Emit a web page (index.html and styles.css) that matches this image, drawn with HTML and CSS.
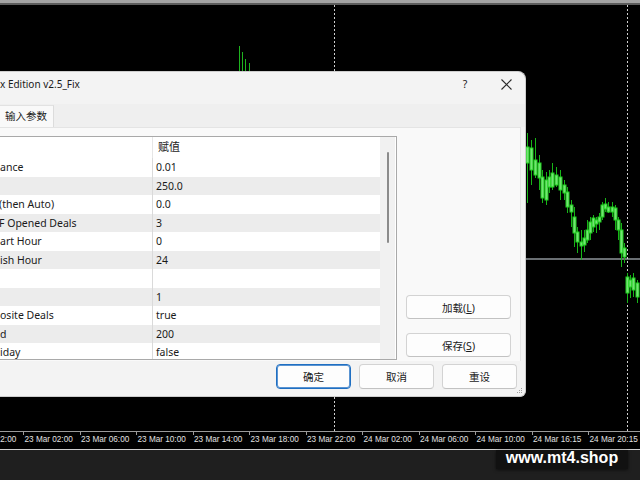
FILE: index.html
```html
<!DOCTYPE html>
<html>
<head>
<meta charset="utf-8">
<link rel="stylesheet" href="styles.css">
</head>
<body>
<div class="screen">
  <div class="topbar"></div>
  <div class="chart">
    <svg class="plot" width="640" height="426" viewBox="0 5 640 426">
      <line x1="0" y1="259" x2="640" y2="259" stroke="#8e949a" stroke-width="1.5"/>
      <line x1="334.5" y1="5" x2="334.5" y2="431" stroke="#d0d0d0" stroke-width="1" stroke-dasharray="2 2"/>
      <line x1="627.5" y1="5" x2="627.5" y2="431" stroke="#d0d0d0" stroke-width="1" stroke-dasharray="2 2"/>
      <g stroke="#1fb31f" stroke-width="1">
        <line x1="239.5" y1="46" x2="239.5" y2="72"/>
        <line x1="242.5" y1="52" x2="242.5" y2="72"/>
        <line x1="245.5" y1="59" x2="245.5" y2="72"/>
        <line x1="249.5" y1="63" x2="249.5" y2="72"/>
      </g>
      <g class="wicks" stroke="#17b517" stroke-width="1">
        <line x1="527.5" y1="133" x2="527.5" y2="203"/>
        <line x1="531.5" y1="140" x2="531.5" y2="185"/>
        <line x1="535.5" y1="138" x2="535.5" y2="178"/>
        <line x1="539.5" y1="155" x2="539.5" y2="190"/>
        <line x1="542.5" y1="170" x2="542.5" y2="203"/>
        <line x1="546.5" y1="172" x2="546.5" y2="205"/>
        <line x1="549.5" y1="170" x2="549.5" y2="193"/>
        <line x1="552.5" y1="163" x2="552.5" y2="190"/>
        <line x1="556.5" y1="167" x2="556.5" y2="187"/>
        <line x1="560.5" y1="170" x2="560.5" y2="200"/>
        <line x1="564.5" y1="180" x2="564.5" y2="200"/>
        <line x1="567.5" y1="187" x2="567.5" y2="213"/>
        <line x1="571.5" y1="200" x2="571.5" y2="227"/>
        <line x1="574.5" y1="207" x2="574.5" y2="247"/>
        <line x1="577.5" y1="227" x2="577.5" y2="253"/>
        <line x1="581.5" y1="230" x2="581.5" y2="260"/>
        <line x1="584.5" y1="230" x2="584.5" y2="252"/>
        <line x1="587.5" y1="220" x2="587.5" y2="243"/>
        <line x1="590.5" y1="217" x2="590.5" y2="240"/>
        <line x1="593.5" y1="215" x2="593.5" y2="232"/>
        <line x1="596.5" y1="217" x2="596.5" y2="233"/>
        <line x1="599.5" y1="213" x2="599.5" y2="230"/>
        <line x1="602.5" y1="202" x2="602.5" y2="220"/>
        <line x1="605.5" y1="198" x2="605.5" y2="212"/>
        <line x1="608.5" y1="202" x2="608.5" y2="213"/>
        <line x1="612.5" y1="202" x2="612.5" y2="217"/>
        <line x1="615.5" y1="205" x2="615.5" y2="230"/>
        <line x1="618.5" y1="217" x2="618.5" y2="240"/>
        <line x1="621.5" y1="223" x2="621.5" y2="267"/>
        <line x1="624.5" y1="243" x2="624.5" y2="263"/>
        <line x1="627.5" y1="273" x2="627.5" y2="303"/>
        <line x1="630.5" y1="275" x2="630.5" y2="298"/>
        <line x1="633.5" y1="273" x2="633.5" y2="297"/>
        <line x1="637.5" y1="280" x2="637.5" y2="303"/>
      </g>
      <g class="bodies" fill="#74e274" stroke="#1fd21f" stroke-width="1">
        <rect x="526" y="147" width="3" height="16"/>
        <rect x="530" y="148" width="3" height="22"/>
        <rect x="534" y="160" width="3" height="15"/>
        <rect x="538" y="163" width="3" height="15"/>
        <rect x="541" y="177" width="3" height="21"/>
        <rect x="545" y="180" width="3" height="20"/>
        <rect x="548" y="177" width="3" height="10"/>
        <rect x="551" y="173" width="3" height="14"/>
        <rect x="555" y="175" width="3" height="10"/>
        <rect x="559" y="177" width="3" height="13"/>
        <rect x="563" y="185" width="3" height="8"/>
        <rect x="566" y="192" width="3" height="15"/>
        <rect x="570" y="205" width="3" height="7"/>
        <rect x="573" y="217" width="3" height="16"/>
        <rect x="576" y="232" width="3" height="10"/>
        <rect x="580" y="242" width="3" height="4"/>
        <rect x="583" y="238" width="3" height="7"/>
        <rect x="586" y="230" width="3" height="10"/>
        <rect x="589" y="222" width="3" height="11"/>
        <rect x="592" y="218" width="3" height="9"/>
        <rect x="595" y="220" width="3" height="4"/>
        <rect x="598" y="217" width="3" height="5"/>
        <rect x="601" y="205" width="3" height="12"/>
        <rect x="604" y="204" width="3" height="5"/>
        <rect x="607" y="207" width="3" height="5"/>
        <rect x="611" y="207" width="3" height="5"/>
        <rect x="614" y="208" width="3" height="12"/>
        <rect x="617" y="220" width="3" height="10"/>
        <rect x="620" y="230" width="3" height="23"/>
        <rect x="623" y="248" width="3" height="9"/>
        <rect x="626" y="277" width="3" height="16"/>
        <rect x="629" y="280" width="3" height="7"/>
        <rect x="632" y="278" width="3" height="12"/>
        <rect x="636" y="283" width="3" height="14"/>
      </g>
    </svg>

    <div class="dialog">
      <div class="titlebar">
        <span class="title">x Edition v2.5_Fix</span>
        <span class="help">?</span>
        <svg class="close" width="11" height="11" viewBox="0 0 11 11"><path d="M0.5 0.5 L10.5 10.5 M10.5 0.5 L0.5 10.5" stroke="#2a2a2a" stroke-width="1.1" fill="none"/></svg>
      </div>
      <div class="tabs">
        <div class="tab">输入参数</div>
      </div>
      <div class="panel">
        <div class="table">
          <div class="grid">
            <div class="row head"><div class="c1"></div><div class="c2">赋值</div></div>
            <div class="row"><div class="c1">ance</div><div class="c2">0.01</div></div>
            <div class="row alt"><div class="c1"></div><div class="c2">250.0</div></div>
            <div class="row"><div class="c1 cut">(then Auto)</div><div class="c2">0.0</div></div>
            <div class="row alt"><div class="c1 cut">F Opened Deals</div><div class="c2">3</div></div>
            <div class="row"><div class="c1">art Hour</div><div class="c2">0</div></div>
            <div class="row alt"><div class="c1">ish Hour</div><div class="c2">24</div></div>
            <div class="row"><div class="c1"></div><div class="c2"></div></div>
            <div class="row alt"><div class="c1"></div><div class="c2">1</div></div>
            <div class="row"><div class="c1">osite Deals</div><div class="c2">true</div></div>
            <div class="row alt"><div class="c1">d</div><div class="c2">200</div></div>
            <div class="row"><div class="c1">iday</div><div class="c2">false</div></div>
          </div>
          <div class="vscroll"><div class="thumb"></div></div>
        </div>
        <div class="side">
          <button class="btn wide">加载(<u>L</u>)</button>
          <button class="btn wide">保存(<u>S</u>)</button>
        </div>
      </div>
      <div class="actions">
        <button class="btn primary">确定</button>
        <button class="btn">取消</button>
        <button class="btn">重设</button>
      </div>
      <svg class="grip" width="6" height="6" viewBox="0 0 6 6">
        <g fill="#a0a0a0">
          <rect x="4" y="0" width="1" height="1"/>
          <rect x="2" y="2" width="1" height="1"/><rect x="4" y="2" width="1" height="1"/>
          <rect x="0" y="4" width="1" height="1"/><rect x="2" y="4" width="1" height="1"/><rect x="4" y="4" width="1" height="1"/>
        </g>
      </svg>
    </div>
  </div>
  <div class="axis">
    <span class="lbl first">22 Mar 22:00</span>
    <span class="lbl">23 Mar 02:00</span>
    <span class="lbl">23 Mar 06:00</span>
    <span class="lbl">23 Mar 10:00</span>
    <span class="lbl">23 Mar 14:00</span>
    <span class="lbl">23 Mar 18:00</span>
    <span class="lbl">23 Mar 22:00</span>
    <span class="lbl">24 Mar 02:00</span>
    <span class="lbl">24 Mar 06:00</span>
    <span class="lbl">24 Mar 10:00</span>
    <span class="lbl">24 Mar 16:15</span>
    <span class="lbl">24 Mar 20:15</span>
  </div>
  <div class="footer">
    <div class="watermark">www.mt4.shop</div>
  </div>
</div>
</body>
</html>
```

FILE: styles.css
```css
* { box-sizing: border-box; margin: 0; padding: 0; }
html, body { width: 640px; height: 480px; overflow: hidden; background: #1e1e1e; }
body { font-family: "Noto Sans", "Noto Sans CJK SC", sans-serif; color: #1a1a1a; }

.screen { width: 640px; height: 480px; display: flex; flex-direction: column; }

.topbar { height: 5px; flex: none; background: #a4a4a4; border-bottom: 2px solid #5c5c5c; }

.chart { height: 426px; flex: none; background: #000; position: relative; overflow: hidden; }
.plot { position: absolute; left: 0; top: 0; display: block; }

.dialog {
  position: absolute; left: 0; top: 66px;
  width: 526px; height: 326px;
  background: #f3f3f3;
  border: 1px solid #cdcdcd; border-left: none;
  border-radius: 0 8px 6px 0;
  display: flex; flex-direction: column;
}

.titlebar { height: 32px; flex: none; display: flex; align-items: flex-start; padding-top: 5px; font-size: 10px; line-height: 14px; }
.title { flex: 1; white-space: nowrap; }
.help { width: 12px; text-align: center; margin-right: 30px; font-size: 10.5px; }
.close { margin: 1.5px 13px 0 0; display: block; }

.tabs { height: 23px; flex: none; display: flex; background: #efefef; }
.tab { margin-top: 1px; height: 22px; width: 54px; padding-left: 5px; background: #f9f9f9; border-right: 1px solid #dcdcdc; border-top: 1px solid #e2e2e2; font-size: 10.5px; line-height: 20px; white-space: nowrap; }

.panel { height: 234px; width: 521px; flex: none; display: flex; align-items: flex-start; background: #f9f9f9; border-top: 1px solid #e4e4e4; border-right: 1px solid #e4e4e4; padding-top: 8px; }

.table { width: 397px; height: 224px; display: flex; border: 1px solid #a9a9a9; border-left: none; background: #fff; }
.grid { width: 380px; height: 222px; overflow: hidden; font-size: 10.5px; }
.row { height: 18.5px; display: flex; background: #fff; line-height: 18px; white-space: nowrap; }
.row.alt { background: #ececec; }
.row.head { height: 21px; line-height: 20px; background: #fff; font-size: 11px; }
.c1 { width: 153px; flex: none; border-right: 1px solid #dadada; overflow: hidden; }
.c1.cut { text-indent: -1px; }
.c2 { flex: 1; padding-left: 3px; }
.head .c2 { padding-left: 5px; }
.head .c1 { border-right-color: #e6e6e6; }

.vscroll { width: 15px; height: 222px; flex: none; background: #f1f1f1; padding: 15px 0 0 7px; }
.thumb { width: 2px; height: 91px; background: #8b8b8b; border-radius: 1px; }

.side { margin-left: 9px; margin-top: 159px; width: 105px; display: flex; flex-direction: column; gap: 14px; }

.btn {
  font-family: "Noto Sans", "Noto Sans CJK SC", sans-serif;
  font-size: 10.5px; color: #1a1a1a;
  height: 24px; width: 75px;
  background: #fdfdfd; border: 1px solid #d3d3d3; border-bottom-color: #c2c2c2;
  border-radius: 4px;
}
.btn.wide { width: 105px; }
.btn u { text-underline-offset: 1px; }
.btn.primary { border: 1px solid #1f6fc2; box-shadow: inset 0 0 0 1px #5a94d2; }

.actions { height: 25px; flex: none; margin-top: 3px; display: flex; justify-content: flex-end; gap: 8px; padding-right: 8px; }
.actions .btn { height: 25px; }

.grip { position: absolute; right: 2px; bottom: 2px; }

.axis {
  height: 19px; flex: none; background: #000;
  border-top: 1px solid #9a9a9a; border-bottom: 1px solid #cfcfcf;
  display: flex; overflow: hidden; white-space: nowrap;
  font-family: "Liberation Sans", Arial, sans-serif; font-size: 8.2px; color: #e2e2e2; line-height: 16px;
}
.lbl { width: 56.5px; flex: none; padding-left: 1.5px; background: linear-gradient(#9a9a9a, #9a9a9a) left top / 1px 3px no-repeat; }
.lbl.first { margin-left: -33.5px; }

.footer { flex: 1; background: #1f1f1f; display: flex; justify-content: flex-end; padding-right: 12px; }
.watermark {
  height: 19px; width: 132px; background: #111;
  box-shadow: 0 1px 3px rgba(0,0,0,0.6);
  font-family: "Liberation Sans", Arial, sans-serif; font-weight: bold; font-size: 16px; line-height: 14px;
  color: #fff; text-align: center; padding-top: 1px;
}
```
